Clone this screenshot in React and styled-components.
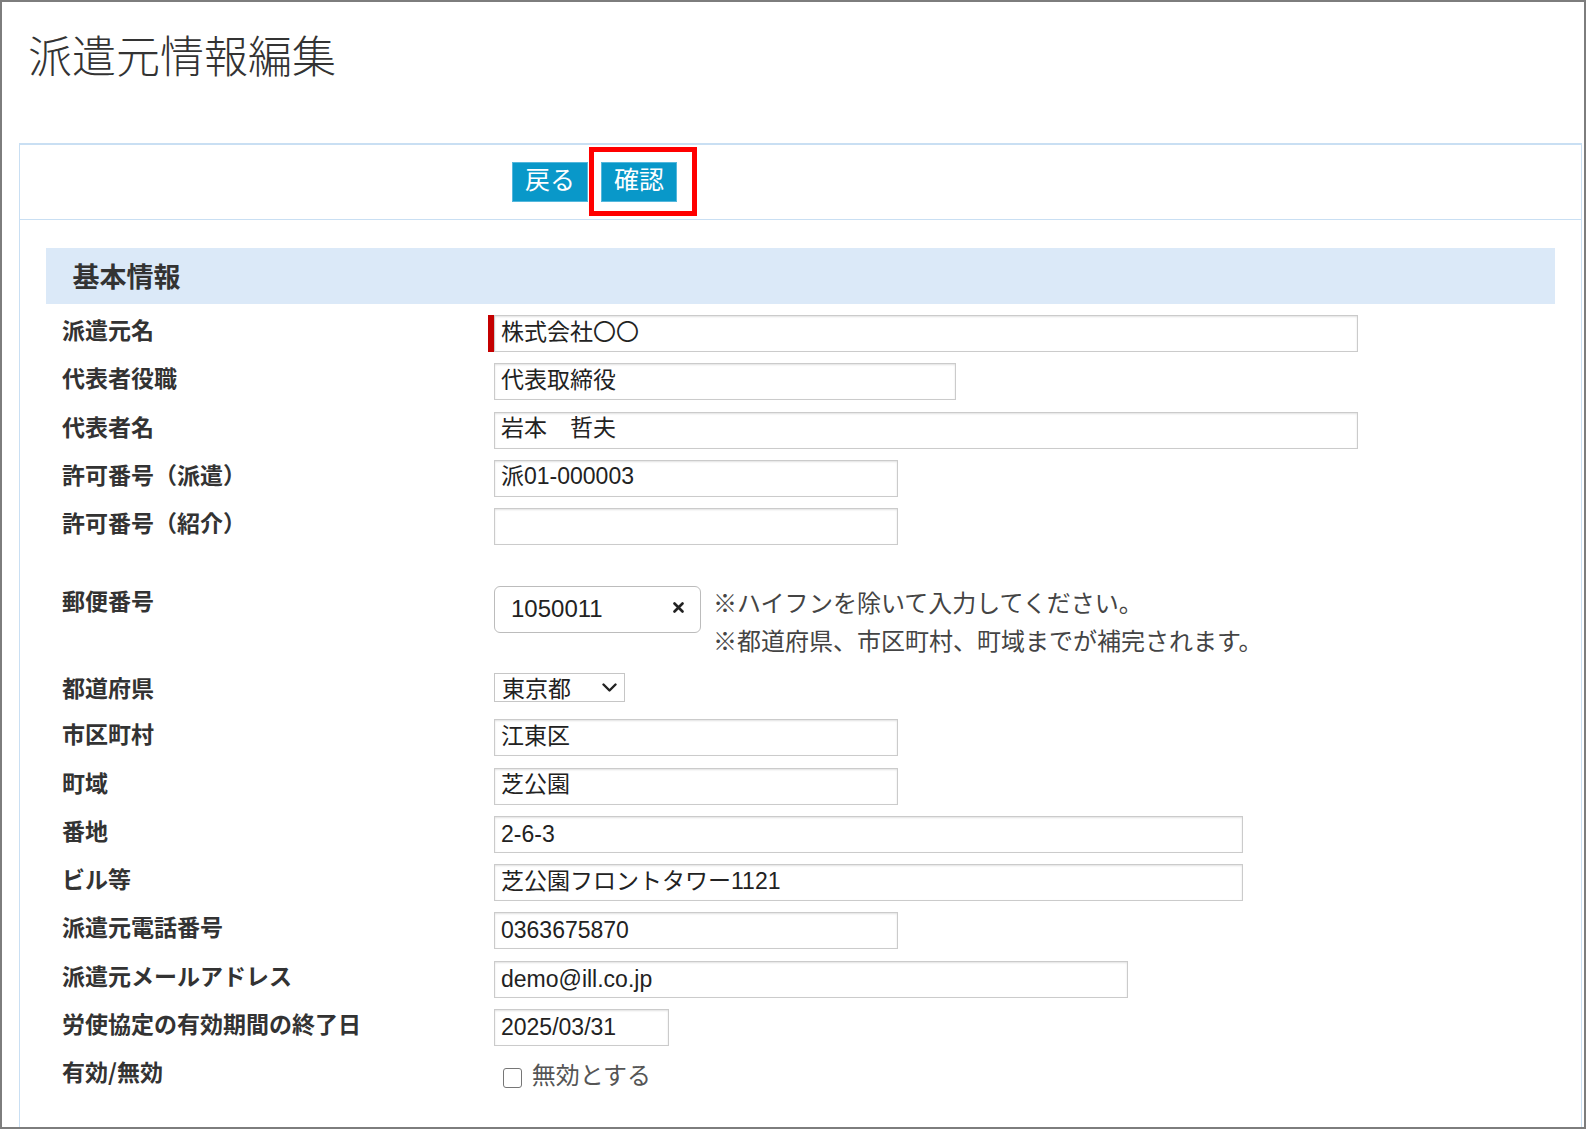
import React from "react";
import styled, { createGlobalStyle } from "styled-components";

const GlobalStyle = createGlobalStyle`
  html, body {
    margin: 0;
    padding: 0;
    background: #fff;
  }
  body {
    font-family: "Liberation Sans", "Noto Sans CJK JP", sans-serif;
    color: #333;
  }
  *, *::before, *::after {
    box-sizing: border-box;
  }
`;

const Frame = styled.div`
  width: 1586px;
  height: 1129px;
  border: 2px solid #7d7d7d;
  overflow: hidden;
  background: #fff;
`;

const PageHeader = styled.header`
  height: 141px;
  padding: 26px 0 0 26px;
`;

const Title = styled.h1`
  margin: 0;
  font-family: "Noto Sans CJK JP", sans-serif;
  font-size: 44px;
  font-weight: 300;
  line-height: 53px;
  color: #333;
`;

const Panel = styled.section`
  margin: 0 2px 0 17px;
  border: 1px solid #c9dff3;
  border-top-width: 2px;
  padding-bottom: 60px;
`;

const ButtonBar = styled.div`
  display: flex;
  align-items: flex-start;
  gap: 13px;
  height: 75px;
  padding: 17px 0 0 492px;
  border-bottom: 1px solid #c9dff3;
`;

const ActionButton = styled.button`
  height: 40px;
  padding: 0 12px 8px;
  border: 1px solid #54b7dc;
  background: #0998c9;
  color: #fff;
  font-family: "Noto Sans CJK JP", sans-serif;
  font-size: 25px;
  line-height: 30px;
  cursor: pointer;
`;

/* red call-out frame drawn over the confirm button */
const Highlight = styled.span`
  position: relative;
  display: inline-flex;
  &::after {
    content: "";
    position: absolute;
    top: -15px;
    right: -20px;
    bottom: -14px;
    left: -12px;
    border: 5px solid #ff0000;
    pointer-events: none;
  }
`;

const SectionBar = styled.h2`
  display: flex;
  align-items: center;
  height: 55.5px;
  margin: 28px 26px 0 25.5px;
  padding-left: 27px;
  background: #dbe9f8;
  font-family: "Noto Sans CJK JP", sans-serif;
  font-size: 27px;
  font-weight: 700;
  color: #333;
`;

const Form = styled.div`
  display: flex;
  flex-direction: column;
  gap: 11.3px;
  padding: 11.5px 0 0 42px;
`;

const Row = styled.div`
  display: grid;
  grid-template-columns: 432px 1fr;
  align-items: start;
  min-height: ${(p) => p.$minHeight || 0}px;
  margin-top: ${(p) => p.$gapBefore || 0}px;
`;

const Label = styled.div`
  font-family: "Noto Sans CJK JP", sans-serif;
  font-size: 23px;
  font-weight: 700;
  line-height: 28px;
  color: #333;
  white-space: nowrap;
`;

/* wide (Japanese) values sit a little higher in the box than plain ASCII ones */
const TextInput = styled.input`
  display: block;
  width: ${(p) => p.$width}px;
  height: 37px;
  margin: 0;
  padding: 0 6px ${(p) => (p.$wide ? 8 : 0)}px;
  border: 1px solid #cbcbcb;
  background: #fff;
  box-shadow: inset 0 1px 2px rgba(0, 0, 0, 0.12)
    ${(p) => (p.$required ? ", -6px 0 0 #c40000" : "")};
  font-family: "Liberation Sans", "Noto Sans CJK JP", sans-serif;
  font-size: 23px;
  color: #222;
  outline: none;
`;

const PostalGroup = styled.div`
  display: flex;
  align-items: flex-start;
  gap: 12px;
`;

const PostalBox = styled.div`
  display: flex;
  align-items: center;
  width: 207px;
  height: 47px;
  padding: 0 16px 0 16px;
  border: 1px solid #bcbcbc;
  border-radius: 6px;
  background: #fff;
`;

const PostalInput = styled.input`
  flex: 1;
  min-width: 0;
  padding: 0;
  border: 0;
  outline: none;
  background: transparent;
  font-family: "Liberation Sans", sans-serif;
  font-size: 24px;
  line-height: 28px;
  color: #222;
`;

const ClearButton = styled.button`
  display: flex;
  align-items: center;
  justify-content: center;
  width: 12px;
  height: 14px;
  margin-top: -4px;
  padding: 0;
  border: 0;
  background: none;
  cursor: pointer;
`;

const Notes = styled.div`
  margin: -3px 0 3px;
  font-family: "Noto Sans CJK JP", sans-serif;
  font-size: 24px;
  line-height: 38px;
  color: #444;
  white-space: nowrap;
`;

const SelectWrap = styled.div`
  position: relative;
  width: 131px;
  height: 29.5px;
`;

const Select = styled.select`
  appearance: none;
  width: 100%;
  height: 100%;
  margin: 0;
  padding: 0 0 0 7px;
  border: 1px solid #c6c6c6;
  border-radius: 0;
  background: #fff;
  font-family: "Noto Sans CJK JP", sans-serif;
  font-size: 23px;
  line-height: 27px;
  color: #222;
  outline: none;
`;

const SelectChevron = styled.svg`
  position: absolute;
  right: 8px;
  top: 10px;
  pointer-events: none;
`;

const CheckLine = styled.label`
  display: flex;
  align-items: center;
  height: 40px;
  padding-left: 8.7px;
  gap: 9.5px;
  font-family: "Noto Sans CJK JP", sans-serif;
  font-size: 24px;
  color: #555;
  cursor: pointer;
`;

const CheckText = styled.span`
  line-height: 28px;
  padding-bottom: 7px;
`;

const CheckBox = styled.input`
  appearance: none;
  width: 19.5px;
  height: 19.5px;
  margin: 1px 0 0;
  border: 1.5px solid #767676;
  border-radius: 3px;
  background: #fff;
`;

const fields = [
  { label: "派遣元名", value: "株式会社〇〇", width: 864, required: true },
  { label: "代表者役職", value: "代表取締役", width: 462 },
  { label: "代表者名", value: "岩本　哲夫", width: 864 },
  { label: "許可番号（派遣）", value: "派01-000003", width: 404 },
  { label: "許可番号（紹介）", value: "", width: 404 },
];

const addressFields = [
  { label: "市区町村", value: "江東区", width: 404 },
  { label: "町域", value: "芝公園", width: 404 },
  { label: "番地", value: "2-6-3", width: 749 },
  { label: "ビル等", value: "芝公園フロントタワー1121", width: 749 },
  { label: "派遣元電話番号", value: "0363675870", width: 404 },
  { label: "派遣元メールアドレス", value: "demo@ill.co.jp", width: 634 },
  { label: "労使協定の有効期間の終了日", value: "2025/03/31", width: 175 },
];

const hasWideChars = (text) => /[^\x00-\x7f]/.test(text);

function FieldRow({ label, value, width, required }) {
  return (
    <Row>
      <Label>{label}</Label>
      <TextInput
        type="text"
        defaultValue={value}
        $width={width}
        $required={required}
        $wide={hasWideChars(value)}
      />
    </Row>
  );
}

export default function App() {
  return (
    <>
      <GlobalStyle />
      <Frame>
        <PageHeader>
          <Title>派遣元情報編集</Title>
        </PageHeader>
        <Panel>
          <ButtonBar>
            <ActionButton type="button">戻る</ActionButton>
            <Highlight>
              <ActionButton type="button">確認</ActionButton>
            </Highlight>
          </ButtonBar>

          <SectionBar>基本情報</SectionBar>

          <Form>
            {fields.map((f) => (
              <FieldRow key={f.label} {...f} />
            ))}

            <Row $gapBefore={29.2}>
              <Label>郵便番号</Label>
              <PostalGroup>
                <PostalBox>
                  <PostalInput type="text" defaultValue="1050011" />
                  <ClearButton type="button" aria-label="clear">
                    <svg width="11" height="11" viewBox="0 0 11 11">
                      <path
                        d="M1.5 1.5 9.5 9.5 M9.5 1.5 1.5 9.5"
                        stroke="#222"
                        strokeWidth="2.6"
                        strokeLinecap="round"
                      />
                    </svg>
                  </ClearButton>
                </PostalBox>
                <Notes>
                  <div>※ハイフンを除いて入力してください。</div>
                  <div>※都道府県、市区町村、町域までが補完されます。</div>
                </Notes>
              </PostalGroup>
            </Row>

            <Row $minHeight={35}>
              <Label>都道府県</Label>
              <SelectWrap>
                <Select defaultValue="東京都">
                  <option>北海道</option>
                  <option>東京都</option>
                  <option>大阪府</option>
                </Select>
                <SelectChevron width="15" height="9" viewBox="0 0 15 9">
                  <polyline
                    points="1.5,1.5 7.5,7.5 13.5,1.5"
                    fill="none"
                    stroke="#222"
                    strokeWidth="2.4"
                    strokeLinecap="round"
                    strokeLinejoin="round"
                  />
                </SelectChevron>
              </SelectWrap>
            </Row>

            {addressFields.map((f) => (
              <FieldRow key={f.label} {...f} />
            ))}

            <Row>
              <Label>有効/無効</Label>
              <CheckLine>
                <CheckBox type="checkbox" />
                <CheckText>無効とする</CheckText>
              </CheckLine>
            </Row>
          </Form>
        </Panel>
      </Frame>
    </>
  );
}
